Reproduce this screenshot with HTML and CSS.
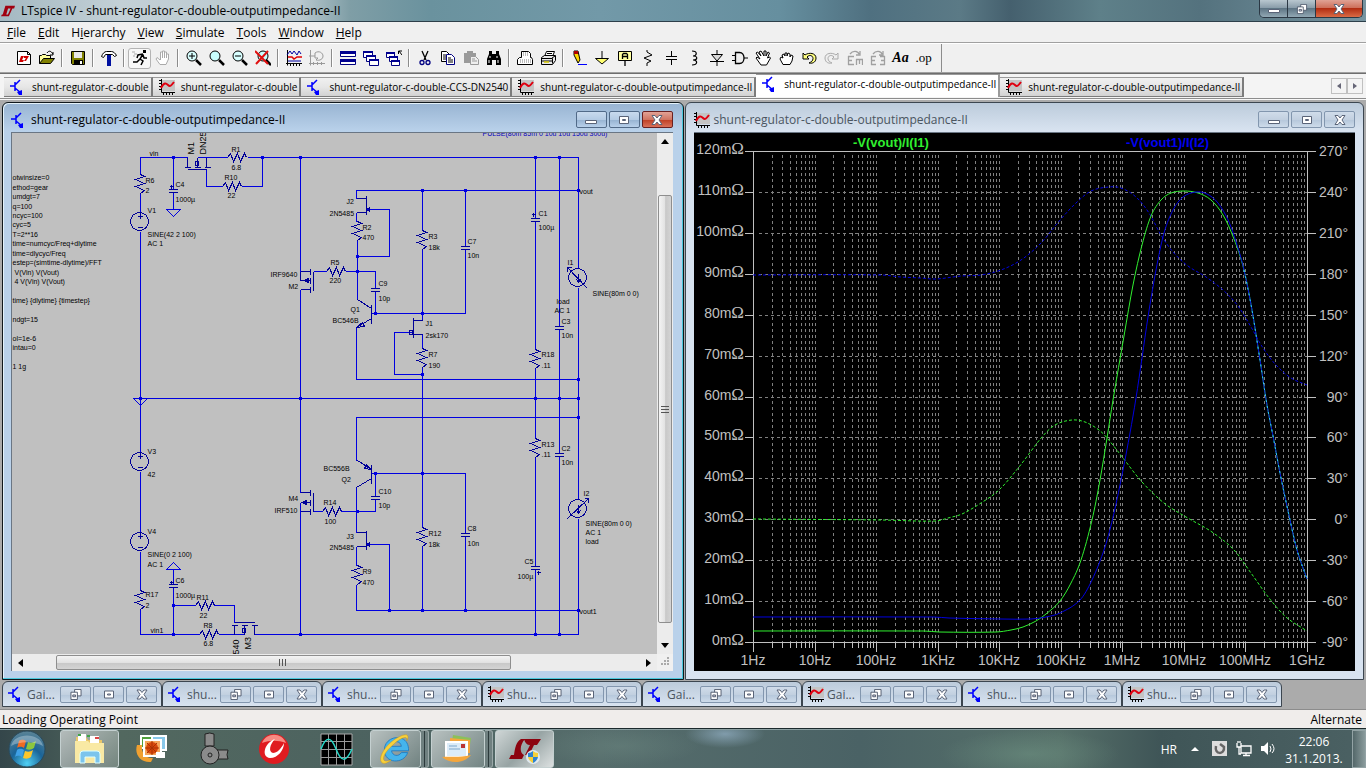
FILE: index.html
```
<!DOCTYPE html>
<html lang="en">
<head>
    <meta charset="UTF-8">
    <meta name="viewport" content="width=device-width, initial-scale=1.0">
    <title>LTspice IV - shunt-regulator-c-double-outputimpedance-II</title>
    <link rel="stylesheet" href="styles.css">
</head>
<body>
    <svg class="sprite" aria-hidden="true">
        <defs>
            <!-- document icons -->
            <symbol id="i-lt" viewBox="0 0 16 16"><path d="M5 2h4L6 12h3l-1 2H0l1-2h1zM8 2h8l-1 3h-2l-4 9h-2l4-9H8z" fill="#a00010"/></symbol>
            <symbol id="i-sch" viewBox="0 0 16 16"><path d="M0 7h5M5 3v9M5 6l5-5M5 9l6 5" fill="none" stroke="#00f" stroke-width="1.5"/><path d="M7 13l5-2v5H9z" fill="#00f"/></symbol>
            <symbol id="i-plot" viewBox="0 0 16 16"><path d="M2 1h14v11H2z" fill="#c4c4c4"/><path d="M2.500 0v13.500H16M0 1.500h2M0 4.500h2M0 7.500h2M0 10.500h2M4.500 14v2M7.500 14v2M10.500 14v2M13.500 14v2" fill="none" stroke="#000"/><path d="M2 9c3-6 5-5 7-3s3 1 6-3" fill="none" stroke="#e00010" stroke-width="2"/></symbol>
            <!-- window buttons -->
            <symbol id="w-min" viewBox="0 0 12 10"><path d="M.5 5.500h11v3H.5z" fill="#fff" stroke="#5a6478"/></symbol>
            <symbol id="w-max" viewBox="0 0 12 10"><path d="M1.500 1.500h9v7h-9z" fill="#fff" stroke="#5a6478"/><path d="M4.500 4.500h3v1h-3z" fill="#dde" stroke="#5a6478"/></symbol>
            <symbol id="w-rest" viewBox="0 0 12 12"><path d="M4.500.5h7v7h-7z" fill="#fff" stroke="#4b5568"/><path d="M.5 3.500h7v8h-7z" fill="#fff" stroke="#4b5568"/><path d="M2.500 6.500h3v2h-3z" fill="#ccd" stroke="#4b5568"/></symbol>
            <symbol id="w-close" viewBox="0 0 12 10"><path d="M1 .5h3l2 2.500 2-2.500h3L8 5l3 4.500H8L6 7 4 9.500H1L4 5z" fill="#fff" stroke="#5a6478"/></symbol>
            <!-- toolbar icons -->
            <symbol id="t-new" viewBox="0 0 16 16"><path d="M1.500 1.500h10l3 3v10h-13z" fill="#fff" stroke="#000"/><path d="M11.500 1.500v3h3" fill="none" stroke="#000"/><path d="M5 6h3l-2 4h2l-1 2H3zM8 6h5l-3 5H8l2-3H8z" fill="#d00000"/></symbol>
            <symbol id="t-open" viewBox="0 0 16 16"><path d="M.5 13.500v-8h2l1-1h3l1 1h4v3" fill="#ffff9c" stroke="#000"/><path d="M.5 13.500l4-5h11l-4 5z" fill="#808000" stroke="#000"/><path d="M8 3c2-3 4-2 6 1M14 2v3h-3" fill="none" stroke="#000"/></symbol>
            <symbol id="t-save" viewBox="0 0 16 16"><path d="M1.500 1.500h13v13h-12l-1-1z" fill="#808000" stroke="#000"/><path d="M4 2h8v6H4z" fill="#e8e8e8"/><path d="M4 10h9v4H4z"/><path d="M10 11h2v3h-2z" fill="#fff"/></symbol>
            <symbol id="t-hammer" viewBox="0 0 16 16"><path d="M.5 6.500c1-3 3-5 5-5h5c2 0 4 2 5 4l-2 1-2-2h-7l-2 3z" fill="#fff" stroke="#000"/><path d="M6 5h4v11H6z" fill="#0010a0"/></symbol>
            <symbol id="t-run" viewBox="0 0 16 16"><path d="M11 0h3v3h-3z"/><path d="M11 4L8 9l3 2-2 4M8 9l-3 3H1M11 4L6 5 5 8M11 5l1 3h3" fill="none" stroke="#000" stroke-width="1.500"/><path d="M0 2h3M2 4h3M1 6h2" stroke="#aaa"/></symbol>
            <symbol id="t-hand" viewBox="0 0 16 16"><path d="M5 10L2 7.500 1 9l4 5.500h6L13.500 9V4h-2v4-6H9.500v6-7H7.500v7-6H5.500v8" fill="#fff" stroke="currentColor"/></symbol>
            <symbol id="t-zin" viewBox="0 0 16 16"><circle cx="6" cy="6" r="5" fill="#d8ffff" stroke="#000"/><path d="M3 6h6M6 3v6" stroke="#000"/><path d="M10 10l5 5" stroke="#000" stroke-width="2.500"/></symbol>
            <symbol id="t-zoom" viewBox="0 0 16 16"><circle cx="6" cy="6" r="5" fill="#c8ffff" stroke="#000"/><path d="M10 10l5 5" stroke="#000" stroke-width="2.500"/></symbol>
            <symbol id="t-zout" viewBox="0 0 16 16"><circle cx="6" cy="6" r="5" fill="#d8ffff" stroke="#000"/><path d="M3 6h6" stroke="#000"/><path d="M10 10l5 5" stroke="#000" stroke-width="2.500"/></symbol>
            <symbol id="t-zfit" viewBox="0 0 16 16"><circle cx="8" cy="6" r="5" fill="#c8ffff" stroke="#000"/><path d="M11 10l5 5" stroke="#000" stroke-width="2.500"/><path d="M0 1l13 13M13 1L1 14" stroke="#e01010" stroke-width="2"/></symbol>
            <symbol id="t-wave" viewBox="0 0 16 16"><path d="M1.500 0v15.500M0 13.500h16M4.500 13v3M7.500 13v3M10.500 13v3M13.500 13v3" fill="none" stroke="#000"/><path d="M1 5l3-4 2 3 2-3 3 4 2-4 2 3" fill="none" stroke="#0000a0"/><path d="M2 7h4l2 2 3-2h5" fill="none" stroke="#e00000" stroke-width="1.500"/><path d="M2 11h13" stroke="#0000a0"/></symbol>
            <symbol id="t-fft" viewBox="0 0 16 16"><path d="M1.500 0v15.500M0 13.500h16M4.500 12v3M8.500 12v3M12.500 12v3M0 6h6" fill="none" stroke="#999"/><path d="M6 3c4-3 8 0 8 3s-3 5-7 4l2-2H6z" fill="none" stroke="#999"/></symbol>
            <symbol id="t-tile" viewBox="0 0 16 16"><path d="M.5 1.500h15v5H.5zM.5 9.500h15v5H.5z" fill="#fff" stroke="#000080"/><path d="M0 1h16v3H0zM0 9h16v3H0z" fill="#000090"/></symbol>
            <symbol id="t-casc" viewBox="0 0 16 16"><g fill="#fff" stroke="#000080"><path d="M.5 1.500h9v6h-9z"/><path d="M3.500 5.500h9v6h-9z"/><path d="M6.500 9.500h9v6h-9z"/></g><path d="M0 1h10v2H0zM3 5h10v2H3zM6 9h10v2H6z" fill="#000090"/></symbol>
            <symbol id="t-clos" viewBox="0 0 16 16"><g fill="#fff" stroke="#000080"><path d="M.5 2.500h8v5h-8z"/><path d="M3.500 6.500h8v5h-8z"/><path d="M5.500 10.500h8v5h-8z"/></g><path d="M0 2h9v2H0zM3 6h9v2H3zM5 10h9v2H5z" fill="#000090"/><path d="M16 5l-3-4M12.500 4V1H16" fill="none" stroke="#000"/></symbol>
            <symbol id="t-cut" viewBox="0 0 16 16"><path d="M5 1l4 9M11 1L7 10" stroke="#000" stroke-width="1.300"/><circle cx="5" cy="12.500" r="2" fill="none" stroke="#000080" stroke-width="1.300"/><circle cx="11" cy="12.500" r="2" fill="none" stroke="#000080" stroke-width="1.300"/></symbol>
            <symbol id="t-copy" viewBox="0 0 16 16"><path d="M1.500 1.500h5l3 3v7h-8z" fill="#fff" stroke="#000"/><path d="M6.500 4.500h5l3 3v7h-8z" fill="#fff" stroke="#000080"/><path d="M3 5h3M3 7h3M3 9h3M8 8h3M8 10h5M8 12h5" stroke="#000"/></symbol>
            <symbol id="t-paste" viewBox="0 0 16 16"><path d="M1 3h12v10H1zM4 1h6v3H4z" fill="#9a9a9a"/><path d="M7.500 6.500h5l3 3v5h-8z" fill="#eee" stroke="#999"/><path d="M9 9h3M9 11h5" stroke="#999"/></symbol>
            <symbol id="t-find" viewBox="0 0 16 16"><path d="M3 1h3v3h4V1h3v3l2 5v6h-5v-5H6v5H1V9l2-5z"/><path d="M4 6v2M11 6v2M3 10v3M12 10v3" stroke="#fff"/></symbol>
            <symbol id="t-pset" viewBox="0 0 16 16"><path d="M4.500 7.500v-6h7l2 2v4h1l1 2v5H.5v-5l2-2z" fill="#fff" stroke="#000"/><path d="M3 10h11M6 5h6M6 3h5M3 12h11" stroke="#777" stroke-dasharray="1 1"/></symbol>
            <symbol id="t-print" viewBox="0 0 16 16"><path d="M4.500 6.500l2-5h8l-2 5" fill="#fff" stroke="#000"/><path d="M1.500 7.500l3-2h11v5l-3 4h-11z" fill="#e8e8e8" stroke="#000"/><path d="M2 8.500h10.500v5M2 11h10M12 8l3-2M7 3.500h5" fill="none" stroke="#000"/><path d="M4 12h5" stroke="#d8c800" stroke-width="1.500"/></symbol>
            <symbol id="t-wire" viewBox="0 0 16 16"><path d="M3 1h4l2 9-2 3L3 5z" fill="#ffd800" stroke="#000"/><path d="M3 1h4v3H3z" fill="#b00000"/><path d="M7 14.500h9" stroke="#00f"/></symbol>
            <symbol id="t-gnd" viewBox="0 0 16 16"><path d="M8 1v7" stroke="#000"/><path d="M1.500 8.500h13L8 14z" fill="#ffff70" stroke="#000"/></symbol>
            <symbol id="t-label" viewBox="0 0 16 16"><path d="M1.500 1.500h13v9h-13z" fill="#ffffa0" stroke="#000"/><path d="M8 11v5M5.500 9V4.500l1-1h3l1 1V9M5.500 6.500h5" fill="none" stroke="#000" stroke-width="1.300"/></symbol>
            <symbol id="t-res" viewBox="0 0 16 16"><path d="M7 0v2l5 3-8 3 7 3-4 2v3" fill="none" stroke="#000"/></symbol>
            <symbol id="t-cap" viewBox="0 0 16 16"><path d="M8.500 1v5M3 6.500h11M3 9.500h11M8.500 10v5" stroke="#000"/></symbol>
            <symbol id="t-ind" viewBox="0 0 16 16"><path d="M6 1c6 0 5 5 1 5 5 0 5 4 0 4 5 0 5 5-1 5" fill="none" stroke="#000" stroke-width="1.200"/></symbol>
            <symbol id="t-dio" viewBox="0 0 16 16"><path d="M8 0v16M1 11.500h14" stroke="#000"/><path d="M2.500 4.500h11L8 11z" fill="#d8d8d8" stroke="#000"/></symbol>
            <symbol id="t-gate" viewBox="0 0 16 16"><path d="M0 5.500h3M0 10.500h3M12 8h4" stroke="#000"/><path d="M3.500 2.500h4c6 0 6 11 0 11h-4z" fill="#eee" stroke="#000" stroke-width="1.300"/></symbol>
            <symbol id="t-move" viewBox="0 0 16 16"><path d="M6 15L1 8l1-1 3 2-4-6 1.500-1L6 6 4 2l2-1 3 5V1h2v5l2-4 1.500 1-2 5 2-1 1 1-4 7z" fill="#fff" stroke="#000"/></symbol>
            <symbol id="t-drag" viewBox="0 0 16 16"><path d="M5 14.500L2 9l1-2 2 1-1-3 2-1 1 2V3h2v3l1-3 2 1v3l1-2 2 1-1 5-2 3.500z" fill="#fff" stroke="#000"/></symbol>
            <symbol id="t-undo" viewBox="0 0 16 16"><path d="M2 3v6h6L6 7c3-3 6-1 6 1.500S10 12 8 13c5 1 7-2 7-5 0-5-7-6-11-3z" fill="#ffff80" stroke="#000"/></symbol>
            <symbol id="t-redo" viewBox="0 0 16 16"><path d="M14 3v6H8l2-2C7 4 4 6 4 8.500S6 12 8 13c-5 1-7-2-7-5 0-5 7-6 11-3z" fill="#eee" stroke="#aaa"/></symbol>
            <symbol id="t-mir" viewBox="0 0 16 16"><path d="M1.500 6v9M1 6.500h6M1 10.500h4M1 14.500h6M9 9.500h7M9.500 9v6M12.500 9v5M15.500 9v6M3 4c3-4 8-3 9 0M13 1v4H9" fill="none" stroke="#a0a0a0" stroke-width="1.300"/></symbol>
            <symbol id="t-rot" viewBox="0 0 16 16"><path d="M1.500 6v9M1 6.500h5M1 10.500h4M1 14.500h5M14.500 6v9M10 6.500h5M11 10.500h4M10 14.500h5M3 4c3-4 8-3 9 0M13 1v4H9" fill="none" stroke="#a0a0a0" stroke-width="1.300"/></symbol>
            <!-- schematic parts -->
            <path id="res" d="M0 0L4 2L-5 5L4 9L-5 12L4 16L0 19"/>
            <path id="resh" d="M0 0L3 -4L6 4L10 -4L13 4L17 -4L19 0"/>
            <path id="cap" d="M-5 0h9M-5 3h9"/>
            <path id="gnd" d="M-7 0H7L0 7z"/>
            <g id="vsrc"><circle r="9"/><path d="M-2 -5h5M1 -9v6M-2 6h5"/></g>
            <path id="dot" d="M-1.500 0h3" stroke-width="3"/>
        </defs>
    </svg>

    <header class="titlebar">
        <svg class="icon"><use href="#i-lt"/></svg>
        <h1>LTspice IV - shunt-regulator-c-double-outputimpedance-II</h1>
        <div class="app-controls">
            <button aria-label="Minimize"><svg><use href="#w-min"/></svg></button>
            <button aria-label="Restore"><svg><use href="#w-rest"/></svg></button>
            <button class="close" aria-label="Close"><svg><use href="#w-close"/></svg></button>
        </div>
    </header>

    <nav class="menubar">
        <button><u>F</u>ile</button>
        <button><u>E</u>dit</button>
        <button>H<u>i</u>erarchy</button>
        <button><u>V</u>iew</button>
        <button><u>S</u>imulate</button>
        <button><u>T</u>ools</button>
        <button><u>W</u>indow</button>
        <button><u>H</u>elp</button>
    </nav>

    <div class="toolbar">
        <button aria-label="New schematic"><svg><use href="#t-new"/></svg></button>
        <button aria-label="Open"><svg><use href="#t-open"/></svg></button>
        <span class="sep"></span>
        <button aria-label="Save"><svg><use href="#t-save"/></svg></button>
        <span class="sep"></span>
        <button aria-label="Control panel"><svg><use href="#t-hammer"/></svg></button>
        <span class="sep"></span>
        <button class="pressed" aria-label="Run"><svg><use href="#t-run"/></svg></button>
        <button class="off" aria-label="Halt"><svg><use href="#t-hand"/></svg></button>
        <span class="sep"></span>
        <button aria-label="Zoom in"><svg><use href="#t-zin"/></svg></button>
        <button aria-label="Pan"><svg><use href="#t-zoom"/></svg></button>
        <button aria-label="Zoom out"><svg><use href="#t-zout"/></svg></button>
        <button aria-label="Zoom full extents"><svg><use href="#t-zfit"/></svg></button>
        <span class="sep"></span>
        <button aria-label="Autorange"><svg><use href="#t-wave"/></svg></button>
        <button aria-label="FFT"><svg><use href="#t-fft"/></svg></button>
        <span class="sep"></span>
        <button aria-label="Tile windows"><svg><use href="#t-tile"/></svg></button>
        <button aria-label="Cascade windows"><svg><use href="#t-casc"/></svg></button>
        <button aria-label="Close windows"><svg><use href="#t-clos"/></svg></button>
        <span class="sep"></span>
        <button aria-label="Cut"><svg><use href="#t-cut"/></svg></button>
        <button aria-label="Copy"><svg><use href="#t-copy"/></svg></button>
        <button aria-label="Paste"><svg><use href="#t-paste"/></svg></button>
        <button aria-label="Find"><svg><use href="#t-find"/></svg></button>
        <span class="sep"></span>
        <button aria-label="Print setup"><svg><use href="#t-pset"/></svg></button>
        <button aria-label="Print"><svg><use href="#t-print"/></svg></button>
        <span class="sep"></span>
        <button aria-label="Wire"><svg><use href="#t-wire"/></svg></button>
        <button aria-label="Ground"><svg><use href="#t-gnd"/></svg></button>
        <button aria-label="Label net"><svg><use href="#t-label"/></svg></button>
        <button aria-label="Resistor"><svg><use href="#t-res"/></svg></button>
        <button aria-label="Capacitor"><svg><use href="#t-cap"/></svg></button>
        <button aria-label="Inductor"><svg><use href="#t-ind"/></svg></button>
        <button aria-label="Diode"><svg><use href="#t-dio"/></svg></button>
        <button aria-label="Component"><svg><use href="#t-gate"/></svg></button>
        <button aria-label="Move"><svg><use href="#t-move"/></svg></button>
        <button aria-label="Drag"><svg><use href="#t-drag"/></svg></button>
        <button aria-label="Undo"><svg><use href="#t-undo"/></svg></button>
        <button aria-label="Redo"><svg><use href="#t-redo"/></svg></button>
        <button aria-label="Mirror"><svg><use href="#t-mir"/></svg></button>
        <button aria-label="Rotate"><svg><use href="#t-rot"/></svg></button>
        <button class="serif" aria-label="Text">Aa</button>
        <button class="serif op" aria-label="SPICE directive">.op</button>
        <span class="toolbar-end"></span>
    </div>

    <div class="tabbar">
        <button class="tab"><svg class="icon"><use href="#i-sch"/></svg>shunt-regulator-c-double</button>
        <button class="tab"><svg class="icon"><use href="#i-plot"/></svg>shunt-regulator-c-double</button>
        <button class="tab"><svg class="icon"><use href="#i-sch"/></svg>shunt-regulator-c-double-CCS-DN2540</button>
        <button class="tab"><svg class="icon"><use href="#i-plot"/></svg>shunt-regulator-c-double-outputimpedance-II</button>
        <button class="tab active"><svg class="icon"><use href="#i-sch"/></svg>shunt-regulator-c-double-outputimpedance-II</button>
        <button class="tab"><svg class="icon"><use href="#i-plot"/></svg>shunt-regulator-c-double-outputimpedance-II</button>
        <div class="tab-scroll">
            <button aria-label="Scroll tabs left"><svg viewBox="0 0 6 8"><path d="M5 1v6L1 4z"/></svg></button>
            <button aria-label="Scroll tabs right"><svg viewBox="0 0 6 8"><path d="M1 1v6l4-3z"/></svg></button>
        </div>
    </div>

    <main class="mdi">
        <div class="windows">
            <section class="window focused">
                <div class="caption">
                    <svg class="icon"><use href="#i-sch"/></svg>
                    <h2>shunt-regulator-c-double-outputimpedance-II</h2>
                    <div class="controls">
                        <button aria-label="Minimize"><svg><use href="#w-min"/></svg></button>
                        <button aria-label="Maximize"><svg><use href="#w-max"/></svg></button>
                        <button class="close" aria-label="Close"><svg><use href="#w-close"/></svg></button>
                    </div>
                </div>
                <div class="scroller">
                    <svg class="schematic">
                        <g transform="translate(-11.500 -132.500)">
                            <!-- wires -->
                            <path class="wire" d="M140 174V157H187M197 157H227M247 157H578V268M578 287V499M578 518V634H254M244 634H218M199 634H140V609M140 589V551M140 532V471M140 452V231M140 212V193
                                M173 157V189M173 192V209M206 169V186H222M241 186H262V157
                                M300 157V271M300 289V492M300 502V634M140 398H578
                                M313 271H326M345 271H375V288M375 291V313M357 240V299M356 327V379H578M371 313H465V249M465 246V190M356 198V190H578
                                M366 209H389V256H357M356 212V221M422 190V230M422 249V320M422 334V348M422 367V527M422 546V610M413 332H394V374H422
                                M535 157V217M535 220V349M535 368V438M535 457V566M535 569V634M559 157V326M559 329V453M559 456V634
                                M578 417H356V460M371 473H465V533M465 536V610M356 487V532M356 546V565M356 584V610H578M375 473V496M375 499V511H340M322 511H313M366 544H389V610
                                M173 569V584M173 587V634M173 605H195M213 605H234V622"/>
                            <g class="part">
                                <use href="#res" x="140" y="174"/><use href="#res" x="140" y="590"/>
                                <use href="#res" x="357" y="221"/><use href="#res" x="422" y="230"/>
                                <use href="#res" x="422" y="348"/><use href="#res" x="535" y="349"/>
                                <use href="#res" x="535" y="438"/><use href="#res" x="422" y="527"/>
                                <use href="#res" x="357" y="565"/>
                                <use href="#resh" x="227" y="157"/><use href="#resh" x="222" y="186"/>
                                <use href="#resh" x="326" y="271"/><use href="#resh" x="322" y="511"/>
                                <use href="#resh" x="195" y="605"/><use href="#resh" x="199" y="634"/>
                                <use href="#cap" x="173" y="189"/><use href="#cap" x="375" y="288"/>
                                <use href="#cap" x="465" y="246"/><use href="#cap" x="535" y="218"/>
                                <use href="#cap" x="559" y="326"/><use href="#cap" x="559" y="453"/>
                                <use href="#cap" x="535" y="566"/><use href="#cap" x="465" y="533"/>
                                <use href="#cap" x="375" y="496"/><use href="#cap" x="173" y="584"/>
                                <path d="M169 186h4M171 184v4M531 214h4M533 212v4M536 572h4M538 570v4M169 582h4M171 580v4"/>
                                <use href="#vsrc" x="139" y="221"/><use href="#vsrc" x="139" y="461"/><use href="#vsrc" x="139" y="541"/>
                                <!-- mosfets -->
                                <path d="M187 157V167M184 167h6M194 167h6M204 167h6M187 169H206M197 167V157M206 157V167M195 161h3v4h-3z"/>
                                <path d="M300 271H310M300 271V280H310M310 268v6M310 277v6M310 286v6M300 289H310M313 271V290M304 280l4-2v4z"/>
                                <path d="M300 492H310M300 502H310M300 511H310M310 489v6M310 499v6M310 508v6M313 492V511M302 502l4-2v4z"/>
                                <path d="M234 634V625M231 625h6M241 625h6M251 625h6M234 622H254M244 625V634M254 625V634M242 628h3v4h-3z"/>
                                <!-- jfets -->
                                <path d="M356 198H366M366 195V214M366 212H356M369 207v4l-3-2z"/>
                                <path d="M422 320H413M413 317V337M413 334H422M409 330h3v4h-3z"/>
                                <path d="M356 532H366M366 530V549M366 546H356M369 542v4l-3-2z"/>
                                <!-- transistors -->
                                <path d="M357 299L371 308M371 304V323M371 318L356 327M356 327l8-1-2-4z"/>
                                <path d="M357 460L371 469M371 464V483M371 478L356 487M371 469l-7-1 2-4z"/>
                                <!-- loads -->
                                <circle cx="577" cy="277" r="9"/><path d="M587 288L567 267v4M567 267h4M578 273v8M576 279l2 3 2-3"/>
                                <circle cx="577" cy="508" r="9"/><path d="M567 518L588 498v4M588 498h-4M578 504v8M576 510l2 3 2-3"/>
                            </g>
                            <g class="wire">
                                <use href="#gnd" x="173" y="209"/><use href="#gnd" x="140" y="398"/>
                                <path d="M166 569h14l-7-7z"/>
                            </g>
                            <g class="wire">
                                <use href="#dot" x="173" y="157"/><use href="#dot" x="262" y="157"/><use href="#dot" x="300" y="157"/><use href="#dot" x="535" y="157"/><use href="#dot" x="559" y="157"/>
                                <use href="#dot" x="422" y="190"/><use href="#dot" x="465" y="190"/><use href="#dot" x="578" y="190"/><use href="#dot" x="357" y="256"/><use href="#dot" x="357" y="271"/>
                                <use href="#dot" x="375" y="313"/><use href="#dot" x="422" y="313"/><use href="#dot" x="422" y="374"/><use href="#dot" x="578" y="379"/>
                                <use href="#dot" x="140" y="398"/><use href="#dot" x="300" y="398"/><use href="#dot" x="535" y="398"/><use href="#dot" x="559" y="398"/><use href="#dot" x="578" y="398"/><use href="#dot" x="578" y="417"/>
                                <use href="#dot" x="375" y="473"/><use href="#dot" x="422" y="473"/><use href="#dot" x="357" y="511"/>
                                <use href="#dot" x="389" y="610"/><use href="#dot" x="422" y="610"/><use href="#dot" x="465" y="610"/><use href="#dot" x="578" y="610"/>
                                <use href="#dot" x="173" y="605"/><use href="#dot" x="173" y="634"/><use href="#dot" x="300" y="634"/><use href="#dot" x="535" y="634"/><use href="#dot" x="559" y="634"/>
                            </g>
                            <g class="note">
                                <text x="12" y="179">otwinsize=0</text>
                                <text x="12" y="189">ethod=gear</text>
                                <text x="12" y="198">umdgt=7</text>
                                <text x="12" y="208">q=100</text>
                                <text x="12" y="217">ncyc=100</text>
                                <text x="12" y="226">cyc=5</text>
                                <text x="12" y="236">T=2**16</text>
                                <text x="12" y="245">time=numcyc/Freq+dlytime</text>
                                <text x="12" y="255">time=dlycyc/Freq</text>
                                <text x="12" y="264">estep=(simtime-dlytime)/FFT</text>
                                <text x="14" y="274">V(Vin) V(Vout)</text>
                                <text x="14" y="283">4 V(Vin) V(Vout)</text>
                                <text x="12" y="302">time} {dlytime} {timestep}</text>
                                <text x="12" y="321">ndgt=15</text>
                                <text x="12" y="340">ol=1e-6</text>
                                <text x="12" y="349">intau=0</text>
                                <text x="12" y="368">1 1g</text>
                                <text x="149" y="155">vin</text><text x="150" y="632">vin1</text>
                                <text x="579" y="193">vout</text><text x="579" y="613">vout1</text>
                                <text x="145" y="182">R6</text><text x="145" y="192">2</text>
                                <text x="147" y="212">V1</text><text x="147" y="236">SINE(42 2 100)</text><text x="147" y="245">AC 1</text>
                                <text x="175" y="186">C4</text><text x="175" y="201">1000µ</text>
                                <text x="231" y="151">R1</text><text x="231" y="169">6.8</text>
                                <text x="224" y="179">R10</text><text x="227" y="197">22</text>
                                <text x="147" y="453">V3</text><text x="147" y="476">42</text>
                                <text x="147" y="533">V4</text><text x="147" y="556">SINE(0 2 100)</text><text x="147" y="566">AC 1</text>
                                <text x="145" y="596">R17</text><text x="145" y="607">2</text>
                                <text x="175" y="582">C6</text><text x="175" y="597">1000µ</text>
                                <text x="196" y="599">R11</text><text x="199" y="617">22</text>
                                <text x="203" y="627">R8</text><text x="203" y="645">6.8</text>
                                <text x="270" y="276">IRF9640</text><text x="288" y="288">M2</text>
                                <text x="288" y="500">M4</text><text x="274" y="512">IRF510</text>
                                <text x="330" y="264">R5</text><text x="329" y="282">220</text>
                                <text x="323" y="504">R14</text><text x="324" y="523">100</text>
                                <text x="346" y="203">J2</text><text x="329" y="215">2N5485</text>
                                <text x="362" y="229">R2</text><text x="362" y="239">470</text>
                                <text x="428" y="238">R3</text><text x="428" y="249">18k</text>
                                <text x="467" y="243">C7</text><text x="467" y="257">10n</text>
                                <text x="378" y="285">C9</text><text x="378" y="300">10p</text>
                                <text x="350" y="311">Q1</text><text x="332" y="322">BC546B</text>
                                <text x="425" y="325">J1</text><text x="425" y="337">2sk170</text>
                                <text x="428" y="356">R7</text><text x="428" y="367">190</text>
                                <text x="538" y="215">C1</text><text x="538" y="229">100µ</text>
                                <text x="567" y="264">I1</text><text x="592" y="295">SINE(80m 0 0)</text>
                                <text x="556" y="303">load</text><text x="554" y="312">AC 1</text>
                                <text x="561" y="323">C3</text><text x="561" y="337">10n</text>
                                <text x="541" y="356">R18</text><text x="541" y="367">.11</text>
                                <text x="541" y="446">R13</text><text x="541" y="456">.11</text>
                                <text x="561" y="450">C2</text><text x="561" y="464">10n</text>
                                <text x="323" y="470">BC556B</text><text x="341" y="481">Q2</text>
                                <text x="378" y="493">C10</text><text x="378" y="507">10p</text>
                                <text x="346" y="538">J3</text><text x="329" y="549">2N5485</text>
                                <text x="362" y="573">R9</text><text x="362" y="584">470</text>
                                <text x="428" y="535">R12</text><text x="428" y="546">18k</text>
                                <text x="467" y="530">C8</text><text x="467" y="545">10n</text>
                                <text x="583" y="495">I2</text><text x="585" y="525">SINE(80m 0 0)</text><text x="585" y="534">AC 1</text><text x="585" y="543">load</text>
                                <text x="524" y="563">C5</text><text x="517" y="578">100µ</text>
                                <text class="blue" x="482" y="135">PULSE(80m 85m 0 10u 10u 150u 300u)</text>
                            </g>
                            <g class="note turned">
                                <text transform="translate(193 154) rotate(-90)">M1</text>
                                <text transform="translate(205 154) rotate(-90)">DN25</text>
                                <text transform="translate(238 654) rotate(-90)">540</text>
                                <text transform="translate(250 649) rotate(-90)">M3</text>
                            </g>
                        </g>
                    </svg>
                    <div class="vscroll">
                        <button aria-label="Scroll up"><svg viewBox="0 0 8 5"><path d="M0 5h8L4 0z"/></svg></button>
                        <div class="vtrack"><div class="thumb"><i></i></div></div>
                        <button aria-label="Scroll down"><svg viewBox="0 0 8 5"><path d="M0 0h8L4 5z"/></svg></button>
                    </div>
                    <div class="hscroll">
                        <button aria-label="Scroll left"><svg viewBox="0 0 5 8"><path d="M5 0v8L0 4z"/></svg></button>
                        <div class="htrack"><div class="thumb"><i></i></div></div>
                        <button aria-label="Scroll right"><svg viewBox="0 0 5 8"><path d="M0 0v8l5-4z"/></svg></button>
                    </div>
                    <svg class="grip" viewBox="0 0 15 16"><path d="M10 4h2M7 7h2M10 7h2M4 10h2M7 10h2M10 10h2" stroke="#aaa" stroke-width="2"/></svg>
                </div>
            </section>

            <section class="window">
                <div class="caption">
                    <svg class="icon"><use href="#i-plot"/></svg>
                    <h2>shunt-regulator-c-double-outputimpedance-II</h2>
                    <div class="controls">
                        <button aria-label="Minimize"><svg><use href="#w-min"/></svg></button>
                        <button aria-label="Maximize"><svg><use href="#w-max"/></svg></button>
                        <button aria-label="Close"><svg><use href="#w-close"/></svg></button>
                    </div>
                </div>
                <svg class="plot" id="plot"></svg>
            </section>
        </div>

        <div class="minimized" id="minimized"></div>
    </main>

    <footer class="statusbar">
        <span>Loading Operating Point</span>
        <span>Alternate</span>
    </footer>

    <div class="taskbar">
        <button class="task start" aria-label="Start">
            <svg viewBox="0 0 38 38">
                <defs>
                    <radialGradient id="orb" cx=".5" cy=".9" r=".9"><stop offset="0" stop-color="#4fd0f4"/><stop offset=".5" stop-color="#1a6498"/><stop offset="1" stop-color="#5c8496"/></radialGradient>
                </defs>
                <circle cx="19" cy="19" r="18" fill="url(#orb)" stroke="#294a5c"/>
                <path d="M11 11c3-2 5-1 7 0l-2 7c-2-1-4-2-7 0z" fill="#f06a22"/>
                <path d="M20 12c2 1 5 1 8-1l-2 7c-3 2-5 2-8 1z" fill="#8cc63e"/>
                <path d="M9 20c3-2 5-1 7 0l-2 7c-2-1-4-2-7 0z" fill="#3fa0e6"/>
                <path d="M17 21c3 1 5 1 8-1l-2 7c-3 2-5 2-8 1z" fill="#fcc62c"/>
                <path d="M3 16C6 2 32 2 35 16 26 11 12 11 3 16z" fill="#fff" opacity=".3"/>
            </svg>
        </button>
        <button class="task open explorer" aria-label="Explorer">
            <svg viewBox="0 0 34 34">
                <path d="M3 5h10l2 3h14v20H3z" fill="#e9c66a"/><path d="M5 2h8v8H5zM17 4h9v8h-9z" fill="#fff"/><path d="M5 2h3v2H5zM14 3h3v2h-3z" fill="#3fa648"/><path d="M22 5h4v2h-4z" fill="#d44"/>
                <path d="M2 9h13l2 2h14v20H2z" fill="#f9e9a4"/><path d="M7 31v-9q0-3 3-3h14q3 0 3 3v9h-5v-6H12v6z" fill="#7cc4ec" stroke="#dff" stroke-width="1"/>
            </svg>
        </button>
        <button class="task photo" aria-label="Photos">
            <svg viewBox="0 0 34 34">
                <path d="M6 4h12v12H6z" fill="#4fa03c" stroke="#fff" stroke-width="2"/><path d="M2 13c-3 10 4 18 14 17l2-4C10 27 6 20 7 13z" fill="#f0a030"/>
                <path d="M17 4h14v14H17z" fill="#88c8ea" stroke="#fff" stroke-width="2"/><path d="M9 8h17v16H9z" fill="#f6a75c" stroke="#fff" stroke-width="2"/>
                <circle cx="17" cy="16" r="6" fill="#d8480a"/><path d="M17 9v14M10 16h14M12 11l10 10M22 11l-10 10" stroke="#a93204"/><path d="M21 20h9v6h-9z" fill="#fff"/>
            </svg>
        </button>
        <button class="task joint" aria-label="Mechanism">
            <svg viewBox="0 0 34 34" fill="#8b8b8b" stroke="#222"><path d="M9 2q5-2 9 0v12H9zM18 18h14q-2 5 0 9H18z"/><circle cx="14" cy="23" r="9"/><circle cx="14" cy="23" r="2"/></svg>
        </button>
        <button class="task trend" aria-label="Antivirus">
            <svg viewBox="0 0 34 34"><circle cx="17" cy="17" r="15" fill="#e01b20"/><path d="M5 11C9 0 25 0 29 11c-8-3-16-3-24 0z" fill="#f78a82"/><path d="M18 7C7 11 4 25 13 26c8 0 14-8 14-15-3 6-7 10-11 10-5-1-3-9 2-14z" fill="#fff"/></svg>
        </button>
        <button class="task scope" aria-label="Oscilloscope">
            <svg viewBox="0 0 34 34"><path d="M1 2h31v31H1z" stroke="#aaa"/><path d="M8.500 2v31M16.500 2v31M24.500 2v31M1 9.500h31M1 17.500h31M1 25.500h31" stroke="#999"/><path d="M1 17C6 4 11 4 16 17s10 14 16 0" fill="none" stroke="#28d8c8" stroke-width="1.500"/></svg>
        </button>
        <button class="task open ie" aria-label="Internet Explorer">
            <svg viewBox="0 0 38 36"><path d="M32 22h-7c-3 5-10 4-11-2h19C34-1 6 2 6 19c0 16 22 16 26 3zM14 15c1-7 10-7 11 0z" fill="#45b4ec" stroke="#1f7cc4"/><path d="M31 9c6-12-9-6-17 1C5 17-1 29 3 33c3 3 9-1 11-3-14 6-10-7 1-16C24 5 33 2 31 9z" fill="#f8d13c" stroke="#c99212" stroke-width=".5"/></svg>
        </button>
        <span class="stack"></span>
        <button class="task open mail" aria-label="Mail">
            <svg viewBox="0 0 34 34"><path d="M12 3l18 3-2 13-18-3z" fill="#8cc05a"/><path d="M9 6l20 2v13H9z" fill="#f4a63c"/><path d="M5 10h21v15H5z" fill="#dcecf8" stroke="#fff" stroke-width="2"/><path d="M20 12h4v4h-4z" fill="#b33"/><path d="M8 14h8M8 17h11" stroke="#7aa6cc"/><path d="M1 25c10-1 15 1 29-2-7 9-21 9-29 2z" fill="#f4a63c"/></svg>
        </button>
        <span class="stack"></span>
        <button class="task open lt" aria-label="LTspice">
            <svg viewBox="0 0 34 34"><path d="M13 7h4c-6 7-5 14-1 16l-2 4H1l2-4h3c1-7 2-13 7-16zM16 7h17l-4 6h-3l-5 10h-4l5-10c-3 0-5-2-6-6z" fill="#8c0410"/><circle cx="25" cy="25" r="7" fill="#dfe8ee"/><path d="M25 19v6h-5v-4q3 0 5-2zM25 25h5q-1 4-5 6z" fill="#2e82d0"/><path d="M25 19q2 2 5 2v4h-5zM20 25h5v6q-4-2-5-6z" fill="#f5d03a"/></svg>
        </button>
        <div class="tray">
            <span class="lang">HR</span>
            <button aria-label="Show hidden icons"><svg viewBox="0 0 8 4"><path d="M0 4h8L4 0z" fill="#fff"/></svg></button>
            <svg viewBox="0 0 16 16"><path d="M0 0h15v15H0z" fill="#ddd"/><path d="M4 5c-2 9 9 9 8 1l-4-3" fill="none" stroke="#666" stroke-width="2.500"/></svg>
            <svg viewBox="0 0 16 16"><path d="M5 5h10v7H5zM7 14.500h7M10 12v3M1 2v4h4V2M3 6v7h2M2 0v2M4 0v2" fill="none" stroke="#fff" stroke-width="1.300"/></svg>
            <svg viewBox="0 0 16 16"><path d="M1 5h3l4-4v13L4 10H1z" fill="#fff"/><path d="M10 5q2 3 0 6M12 3q4 5 0 9" fill="none" stroke="#fff"/></svg>
        </div>
        <time class="clock">22:06<br>31.1.2013.</time>
        <button class="show-desktop" aria-label="Show desktop"></button>
    </div>

    <script src="script.js"></script>
</body>
</html>
```
FILE: styles.css
```
* {
    box-sizing: border-box;
}

body {
    margin: 0;
    height: 100vh;
    display: flex;
    flex-direction: column;
    overflow: hidden;
    font-family: "Open Sans", "Noto Sans", sans-serif;
    font-size: 12px;
    color: #000;
    background-color: #f0f0f0;
}

button {
    margin: 0;
    padding: 0;
    border: none;
    background: none;
    font: inherit;
    color: inherit;
    display: flex;
    align-items: center;
    justify-content: center;
}

h1,
h2 {
    margin: 0;
    font-size: 12px;
    font-weight: normal;
    white-space: nowrap;
}

.sprite {
    position: absolute;
    width: 0;
    height: 0;
}

.icon {
    width: 16px;
    height: 16px;
    flex: none;
}

/* title bar */
.titlebar {
    height: 22px;
    flex: none;
    display: flex;
    align-items: center;
    gap: 5px;
    border-bottom: 1px solid #2d3f4a;
    background: linear-gradient(90deg, #a4b9c2 0, #c3d0d6 120px, #b9c8ce 300px, #7f9ea6 350px, #6a929e 430px, #7299a8 600px, #668f9f 780px, #4f7080 870px, #5b7a86 960px, #45606e 1010px, #5e8089 1100px, #54727e 1200px, #7794a0 100%);
}

.titlebar .icon {
    height: 14px;
}

.app-controls {
    display: flex;
    align-self: flex-start;
    margin: 0 3px 0 auto;
    border: 1px solid #2b3844;
    border-top: none;
    border-radius: 0 0 5px 5px;
    overflow: hidden;
}

.app-controls button {
    width: 28px;
    height: 17px;
    border-right: 1px solid #2b3844;
    background: linear-gradient(#b9c7cf, #8599a6 50%, #5e7584 50%, #92a8b4);
}

.app-controls .close {
    width: 46px;
    border-right: none;
    background: linear-gradient(#e0a294, #cc6a55 50%, #b22d12 50%, #da6b45);
}

.app-controls svg,
.controls svg {
    width: 12px;
    height: 10px;
}

/* menu and toolbar */
.menubar {
    height: 21px;
    flex: none;
    display: flex;
    border-bottom: 1px solid #a0a0a0;
}

.menubar button {
    padding: 0 6px;
}

.menubar button:first-child {
    padding-left: 7px;
}

.toolbar {
    height: 30px;
    flex: none;
    display: flex;
    align-items: center;
    padding-left: 12px;
    border-top: 1px solid #fff;
    border-bottom: 1px solid #a0a0a0;
}

.toolbar button {
    width: 23px;
    height: 21px;
}

.toolbar button svg {
    width: 16px;
    height: 16px;
}

.toolbar .pressed {
    border: 1px solid #b4b4b4;
    border-radius: 3px;
    background-color: #f8f8f8;
}

.toolbar .off {
    color: #aaa;
}

.toolbar .serif {
    font: italic bold 14px "Liberation Serif", serif;
}

.toolbar .op {
    font: 13px "Liberation Serif", serif;
}

.sep {
    width: 2px;
    height: 18px;
    margin: 0 3px;
    border-left: 1px solid #8c8c8c;
    border-right: 1px solid #fff;
}

.toolbar-end {
    align-self: stretch;
    margin-left: 6px;
    border-left: 1px solid #8c8c8c;
}

/* document tabs */
.tabbar {
    height: 26px;
    flex: none;
    display: flex;
    align-items: flex-end;
    padding: 0 3px 1px 4px;
    border-top: 1px solid #6e6e6e;
    border-bottom: 1px solid #8c8c8c;
    background-color: #f4f4f4;
    font-size: 10px;
}

.tab {
    height: 20px;
    flex: none;
    gap: 6px;
    padding: 0 2px 0 6px;
    border-top: 1px solid #9a9a9a;
    border-right: 2px solid #7c7c7c;
    border-bottom: 1px solid #7c7c7c;
    background: linear-gradient(#f0f0f0, #e6e6e6 50%, #d2d2d2);
    white-space: nowrap;
}

.tab.active {
    height: 23px;
    padding-bottom: 4px;
    border-right-color: #9a9a9a;
    border-bottom: none;
    background: #fff;
}

.tab-scroll {
    display: flex;
    margin: 0 0 3px auto;
}

.tab-scroll button {
    width: 16px;
    height: 16px;
    border: 1px solid #c0c0c0;
    background-color: #f4f4f4;
}

.tab-scroll svg {
    width: 6px;
    height: 8px;
    fill: #667;
}

/* child windows */
.mdi {
    flex: 1;
    min-height: 0;
    display: flex;
    flex-direction: column;
    padding: 2px 2px 2px;
    background-color: #ababab;
    border-top: 1px solid #f8f8f8;
}

.windows {
    flex: 1;
    min-height: 0;
    display: flex;
    gap: 1px;
}

.window {
    flex: 1;
    min-width: 0;
    display: flex;
    flex-direction: column;
    padding: 0 8px 8px;
    border: 1px solid #3c4650;
    border-radius: 6px 6px 0 0;
    background: linear-gradient(#bccbdb, #d8e3f0 28px, #d8e3f0);
    color: #4a5560;
}

.window.focused {
    padding-right: 10px;
    border-color: #10181c;
    box-shadow: inset -1px -1px 0 #49c8dc, inset 1px 1px 0 #e4f2fa;
    background: linear-gradient(#98b4d2, #b9d1ea 28px, #b9d1ea);
    color: #000;
}

.caption {
    height: 29px;
    flex: none;
    display: flex;
    align-items: center;
    padding-top: 4px;
    gap: 4px;
}

.controls {
    display: flex;
    gap: 2px;
    margin-left: auto;
}

.controls button {
    width: 31px;
    height: 17px;
    border: 1px solid #8296ae;
    border-radius: 2px;
    background: linear-gradient(#d0dcea, #c2d0e0 50%, #b4c6da 50%, #cddbea);
}

.focused .controls button {
    border-color: #516a88;
    background: linear-gradient(#c8daee, #b4cbe4 50%, #94b1d0 50%, #b8d0ea);
}

.focused .controls .close {
    border-color: #6a2020;
    background: linear-gradient(#e2a296, #d07562 50%, #bd3d22 50%, #d9715a);
}

.scroller {
    flex: 1;
    min-height: 0;
    display: grid;
    grid-template-columns: minmax(0, 1fr) 16px;
    grid-template-rows: minmax(0, 1fr) 17px;
    border-top: 1px solid #6a7684;
    border-left: 1px solid #6a7684;
    background-color: #f0f0f0;
}

.schematic {
    width: 100%;
    height: 100%;
    overflow: hidden;
    background-color: #c0c0c0;
    shape-rendering: crispEdges;
}

.wire {
    fill: none;
    stroke: #0000e0;
}

.part {
    fill: none;
    stroke: #000098;
}

.note {
    font-family: "Liberation Sans", Arial, sans-serif;
    font-size: 7px;
    fill: #000;
}

.note.turned {
    font-size: 9px;
}

.note .blue {
    fill: #0000c0;
}

.vscroll,
.hscroll {
    display: flex;
    background-color: #ececec;
}

.vscroll {
    flex-direction: column;
}

.vscroll button,
.hscroll button {
    width: 16px;
    height: 17px;
}

.vscroll button svg {
    width: 8px;
    height: 5px;
}

.hscroll button svg {
    width: 5px;
    height: 8px;
}

.vtrack,
.htrack {
    flex: 1;
    display: flex;
}

.vtrack {
    flex-direction: column;
    padding: 45px 1px 14px;
}

.htrack {
    padding: 1px 130px 1px 28px;
}

.thumb {
    flex: 1;
    display: flex;
    align-items: center;
    justify-content: center;
    border: 1px solid #8e8e8e;
    border-radius: 2px;
    background: linear-gradient(#f4f4f4, #e2e2e2 50%, #c8c8c8 55%, #d4d4d4);
}

.vtrack .thumb {
    background: linear-gradient(90deg, #f4f4f4, #e2e2e2 50%, #c8c8c8 55%, #d4d4d4);
}

.thumb i {
    width: 8px;
    height: 7px;
    background: repeating-linear-gradient(90deg, #555 0, #555 1px, transparent 1px, transparent 3px);
}

.vtrack .thumb i {
    background: repeating-linear-gradient(#555 0, #555 1px, transparent 1px, transparent 3px);
}

.grip {
    width: 15px;
    height: 16px;
}

/* waveform pane */
.plot {
    flex: 1;
    min-height: 0;
    width: 100%;
    border-top: 1px solid #6a7684;
    background-color: #000;
    font-family: "Liberation Sans", Arial, sans-serif;
    font-size: 14px;
    fill: #c0c0c0;
    overflow: hidden;
}

.plot path {
    fill: none;
    stroke: #c0c0c0;
}

.plot .axis {
    shape-rendering: crispEdges;
}

.plot .grid {
    stroke: #808080;
    stroke-dasharray: 3 3;
    shape-rendering: crispEdges;
}

.plot .ohm {
    font-family: "Liberation Serif", serif;
    font-size: 17px;
}

.plot .trace-name {
    font-size: 13px;
    font-weight: bold;
}

.plot .green {
    stroke: #30f030;
}

.plot .blue {
    stroke: #0000e0;
}

.plot .overlap {
    stroke: #30d8e0;
    stroke-dasharray: 2 4;
}

.plot .phase {
    stroke-dasharray: 3 2;
}

.plot text.green {
    fill: #30f030;
    stroke: none;
}

.plot text.blue {
    fill: #0000f0;
    stroke: none;
}

/* minimized windows */
.minimized {
    height: 27px;
    flex: none;
    display: flex;
    padding-top: 1px;
}

.mini {
    flex: 0 1 160px;
    min-width: 0;
    display: flex;
    align-items: center;
    gap: 3px;
    padding: 0 4px 0 5px;
    border: 1px solid #3c4650;
    border-radius: 6px 6px 0 0;
    background: linear-gradient(#bccbdb, #d8e3f0);
    color: #4a5560;
}

.mini .controls svg {
    height: 11px;
}

/* status line */
.statusbar {
    height: 20px;
    flex: none;
    display: flex;
    align-items: center;
    justify-content: space-between;
    padding: 0 4px 0 2px;
    border-top: 1px solid #8c8c8c;
    border-bottom: 1px solid #1c2a2c;
    background-color: #f0edeb;
}

/* taskbar */
.taskbar {
    height: 39px;
    flex: none;
    display: flex;
    align-items: stretch;
    padding-left: 7px;
    color: #fff;
    background:
        radial-gradient(ellipse 40px 14px at 725px 4px, rgba(160, 190, 215, 0.6), transparent),
        radial-gradient(ellipse 90px 24px at 1030px 24px, rgba(120, 160, 140, 0.4), transparent),
        radial-gradient(ellipse 80px 20px at 620px 16px, rgba(120, 150, 140, 0.3), transparent),
        linear-gradient(90deg, #34464a 0, #52685f 120px, #4c6260 400px, #566d6c 600px, #4a6265 860px, #567069 1060px, #3f5557 1160px, #4b6163 100%);
    border-top: 1px solid #8ba0a2;
}

.task {
    flex: none;
    width: 61px;
}

.task svg {
    width: 34px;
    height: 34px;
}

.task.start {
    width: 40px;
    margin-right: 13px;
}

.task.start svg {
    width: 38px;
    height: 38px;
}

.task.open {
    border: 1px solid #c4d0d0;
    border-radius: 3px;
    background: linear-gradient(135deg, rgba(255, 255, 255, 0.6), rgba(255, 255, 255, 0.2));
}

.task.explorer {
    width: 59px;
    margin-right: 2px;
}

.task.scope {
    width: 66px;
}

.task.ie {
    width: 51px;
}

.task.mail {
    width: 54px;
}

.task.lt {
    width: 59px;
    background: linear-gradient(135deg, #cfd6d6, #97a4a4 50%, #dce0e0);
}

.stack {
    width: 8px;
    flex: none;
    margin: 0 2px 0 0;
    border: 1px solid #9aa8a8;
    border-left: none;
    border-radius: 0 3px 3px 0;
    background: repeating-linear-gradient(90deg, #6f8080 0, #6f8080 3px, #2c3a3c 3px, #2c3a3c 4px);
}

.tray {
    display: flex;
    align-items: center;
    gap: 8px;
    margin-left: auto;
}

.tray svg {
    width: 16px;
    height: 16px;
}

.tray button {
    width: 16px;
    height: 16px;
    margin: 0 1px 0 2px;
}

.tray button svg {
    width: 8px;
    height: 4px;
}

.clock {
    width: 76px;
    padding-top: 3px;
    text-align: center;
    line-height: 17px;
}

.show-desktop {
    width: 14px;
    border: 1px solid #93a3a5;
    background: linear-gradient(90deg, #54686a, #8a9b9c);
}
```
FILE: script.js
```
const plot = document.getElementById('plot');

// plot frame, in pixels of the pane
const frame = { left: 59, right: 613, top: 18, bottom: 509 };

function add(name, attrs, text) {
    const el = document.createElementNS('http://www.w3.org/2000/svg', name);
    for (const key in attrs) el.setAttribute(key, attrs[key]);
    if (text) el.textContent = text;
    plot.appendChild(el);
    return el;
}

// smooth curve through the points
function curve(points) {
    let d = 'M' + points[0];
    for (let i = 0; i < points.length - 1; i++) {
        const p0 = points[i - 1] || points[i];
        const p1 = points[i];
        const p2 = points[i + 1];
        const p3 = points[i + 2] || p2;
        const reach = (p2[0] - p1[0]) / 3;
        const slope1 = (p2[1] - p0[1]) / (p2[0] - p0[0]);
        const slope2 = (p3[1] - p1[1]) / (p3[0] - p1[0]);
        d += `C${p1[0] + reach} ${p1[1] + slope1 * reach} ${p2[0] - reach} ${p2[1] - slope2 * reach} ${p2[0]} ${p2[1]}`;
    }
    return d;
}

function drawGrid() {
    const { left, right, top, bottom } = frame;
    const decade = (right - left) / 9;
    const step = (bottom - top) / 12;
    let grid = '';
    let axis = `M${left} ${top}H${right}V${bottom}H${left}z`;

    for (let i = 0; i < 9; i++) {
        for (let n = 1; n < 10; n++) {
            const x = Math.round(left + decade * (i + Math.log10(n)));
            if (i || n > 1) grid += `M${x} ${top + 3}V${bottom}`;
            axis += `M${x} ${bottom}v${n === 1 ? 9 : 5}`;
        }
    }
    axis += `M${right} ${bottom}v9`;

    for (let i = 0; i <= 12; i++) {
        const y = Math.round(top + step * i);
        if (i && i < 12) grid += `M${left + 5} ${y}H${right}`;
        axis += `M${left - 9} ${y}h9M${right} ${y}h8`;
        const label = add('text', { x: left - 9, y: y + 3, 'text-anchor': 'end' }, `${120 - i * 10}m`);
        label.innerHTML += '<tspan class="ohm">Ω</tspan>';
        add('text', { x: right + 41, y: y + 5, 'text-anchor': 'end' }, `${270 - i * 30}°`);
    }

    add('path', { d: grid, class: 'grid', transform: 'translate(.5 .5)' });
    add('path', { d: axis, class: 'axis', transform: 'translate(.5 .5)' });

    ['1Hz', '10Hz', '100Hz', '1KHz', '10KHz', '100KHz', '1MHz', '10MHz', '100MHz', '1GHz'].forEach((name, i) => {
        add('text', { x: Math.round(left + decade * i), y: bottom + 23, 'text-anchor': 'middle' }, name);
    });
}

const fall = [[550, 137], [558, 177], [566, 227], [573, 272], [580, 308], [586, 340], [596, 387], [603, 417], [613, 446]];

const traces = {
    'green phase': [[59, 386], [187, 387], [242, 388], [254, 385], [268, 381], [287, 370], [305, 357], [325, 334], [348, 304], [361, 292], [378, 287], [391, 289], [405, 297], [414, 306], [429, 325], [448, 349], [470, 370], [492, 384], [518, 399], [540, 417], [557, 440], [575, 465], [592, 484], [613, 498]],
    'blue phase': [[59, 142], [187, 142], [207, 144], [227, 145], [242, 146], [267, 143], [287, 142], [307, 137], [327, 127], [347, 110], [367, 86], [382, 70], [397, 58], [415, 54], [427, 55], [442, 64], [455, 80], [467, 102], [479, 119], [494, 133], [512, 144], [529, 157], [544, 173], [557, 194], [569, 215], [582, 232], [597, 245], [613, 252]],
    'green': [[59, 498], [230, 498], [245, 499], [302, 499], [317, 497], [329, 494], [342, 488], [352, 481], [366, 468], [377, 450], [387, 427], [398, 387], [406, 347], [413, 305], [419, 267], [430, 203], [439, 152], [448, 112], [457, 83], [467, 67], [477, 60], [490, 58], [504, 60], [517, 67], [529, 82], [540, 106], ...fall],
    'blue': [[59, 484], [240, 484], [255, 485], [307, 486], [337, 486], [352, 484], [366, 480], [386, 467], [398, 447], [411, 414], [420, 380], [429, 337], [436, 300], [442, 265], [448, 225], [454, 184], [462, 137], [470, 100], [479, 77], [489, 64], [502, 59], [513, 61], [524, 70], [535, 89], [544, 115], ...fall],
    'overlap': fall
};

drawGrid();
for (const name in traces) {
    add('path', { d: curve(traces[name]), class: name });
}
add('text', { x: 159, y: 14, class: 'trace-name green' }, '-V(vout)/I(I1)');
add('text', { x: 432, y: 14, class: 'trace-name blue' }, '-V(vout1)/I(I2)');

// row of minimized windows
const minis = [['sch', 'Gai...'], ['sch', 'shu...'], ['sch', 'shu...'], ['plot', 'shu...'], ['sch', 'Gai...'], ['plot', 'Gai...'], ['sch', 'shu...'], ['plot', 'shu...']];

document.getElementById('minimized').innerHTML = minis.map(([kind, name]) => `
    <div class="mini">
        <svg class="icon"><use href="#i-${kind}"/></svg>
        <span>${name}</span>
        <div class="controls">
            <button aria-label="Restore"><svg><use href="#w-rest"/></svg></button>
            <button aria-label="Maximize"><svg><use href="#w-max"/></svg></button>
            <button aria-label="Close"><svg><use href="#w-close"/></svg></button>
        </div>
    </div>`).join('');
```
